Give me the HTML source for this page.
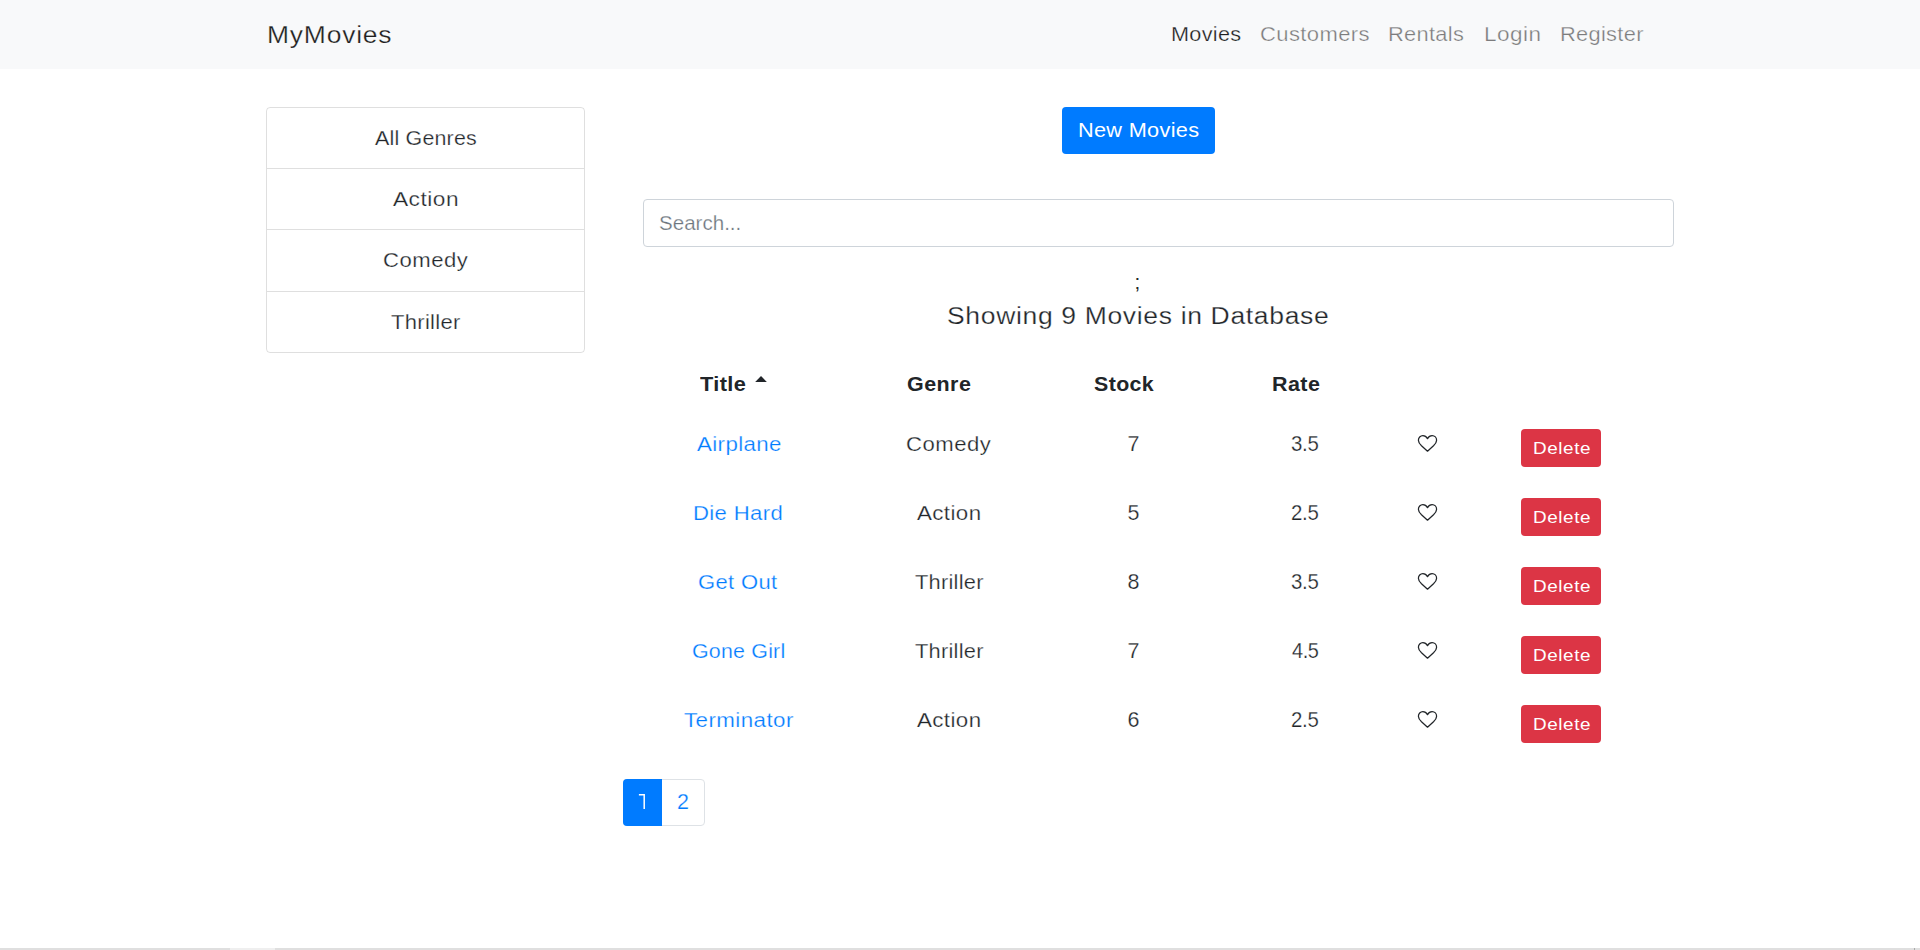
<!DOCTYPE html>
<html lang="en"><head><meta charset="utf-8"><title>MyMovies</title>
<style>
html,body{margin:0;padding:0;background:#fff;}
body{width:1920px;height:950px;position:relative;overflow:hidden;font-family:"Liberation Sans",sans-serif;color:#212529;}
.tx{position:absolute;white-space:nowrap;line-height:1;font-weight:400;transform-origin:0 0;}
.b{font-weight:700;}
a.tx{text-decoration:none;}
.box{position:absolute;box-sizing:border-box;}
.hrt{position:absolute;}
</style></head><body>
<nav class="box" style="left:0;top:0;width:1920px;height:69px;background:#f8f9fa"></nav>

<div class="box" style="left:266px;top:107px;width:319px;height:246px;border:1px solid rgba(0,0,0,.125);border-radius:4px"></div>
<div class="box" style="left:267px;top:168px;width:317px;height:1px;background:rgba(0,0,0,.125)"></div>
<div class="box" style="left:267px;top:229px;width:317px;height:1px;background:rgba(0,0,0,.125)"></div>
<div class="box" style="left:267px;top:291px;width:317px;height:1px;background:rgba(0,0,0,.125)"></div>
<div class="box" style="left:1062px;top:107px;width:153px;height:47px;background:#007bff;border-radius:4px"></div>
<div class="box" style="left:643px;top:199px;width:1031px;height:48px;border:1px solid #ced4da;border-radius:4px;background:#fff"></div>
<span class="tx" style="left:1134.5px;top:271.5px;font-size:20.5px;color:#212529">;</span>
<svg class="hrt" style="left:754px;top:375px" width="14" height="8" viewBox="0 0 14 8"><path d="M1.2 7 L7 1 L12.8 7 Z" fill="#212529"/></svg>
<div class="box" style="left:1521px;top:429px;width:80px;height:38px;background:#dc3545;border-radius:4px"></div>
<svg class="hrt" style="left:1417px;top:434px" width="21" height="18" viewBox="0 0 21 18"><path d="M10.5 4.6 C9.3 2.6 7.7 1.7 5.9 1.7 C3.3 1.7 1.4 3.7 1.4 6.3 C1.4 8.4 2.6 10 4.5 11.8 L10.5 17.2 L16.5 11.8 C18.4 10 19.6 8.4 19.6 6.3 C19.6 3.7 17.7 1.7 15.1 1.7 C13.3 1.7 11.7 2.6 10.5 4.6 Z" fill="none" stroke="#212529" stroke-width="1.25" stroke-linejoin="round"/></svg>
<div class="box" style="left:1521px;top:498px;width:80px;height:38px;background:#dc3545;border-radius:4px"></div>
<svg class="hrt" style="left:1417px;top:503px" width="21" height="18" viewBox="0 0 21 18"><path d="M10.5 4.6 C9.3 2.6 7.7 1.7 5.9 1.7 C3.3 1.7 1.4 3.7 1.4 6.3 C1.4 8.4 2.6 10 4.5 11.8 L10.5 17.2 L16.5 11.8 C18.4 10 19.6 8.4 19.6 6.3 C19.6 3.7 17.7 1.7 15.1 1.7 C13.3 1.7 11.7 2.6 10.5 4.6 Z" fill="none" stroke="#212529" stroke-width="1.25" stroke-linejoin="round"/></svg>
<div class="box" style="left:1521px;top:567px;width:80px;height:38px;background:#dc3545;border-radius:4px"></div>
<svg class="hrt" style="left:1417px;top:572px" width="21" height="18" viewBox="0 0 21 18"><path d="M10.5 4.6 C9.3 2.6 7.7 1.7 5.9 1.7 C3.3 1.7 1.4 3.7 1.4 6.3 C1.4 8.4 2.6 10 4.5 11.8 L10.5 17.2 L16.5 11.8 C18.4 10 19.6 8.4 19.6 6.3 C19.6 3.7 17.7 1.7 15.1 1.7 C13.3 1.7 11.7 2.6 10.5 4.6 Z" fill="none" stroke="#212529" stroke-width="1.25" stroke-linejoin="round"/></svg>
<div class="box" style="left:1521px;top:636px;width:80px;height:38px;background:#dc3545;border-radius:4px"></div>
<svg class="hrt" style="left:1417px;top:641px" width="21" height="18" viewBox="0 0 21 18"><path d="M10.5 4.6 C9.3 2.6 7.7 1.7 5.9 1.7 C3.3 1.7 1.4 3.7 1.4 6.3 C1.4 8.4 2.6 10 4.5 11.8 L10.5 17.2 L16.5 11.8 C18.4 10 19.6 8.4 19.6 6.3 C19.6 3.7 17.7 1.7 15.1 1.7 C13.3 1.7 11.7 2.6 10.5 4.6 Z" fill="none" stroke="#212529" stroke-width="1.25" stroke-linejoin="round"/></svg>
<div class="box" style="left:1521px;top:705px;width:80px;height:38px;background:#dc3545;border-radius:4px"></div>
<svg class="hrt" style="left:1417px;top:710px" width="21" height="18" viewBox="0 0 21 18"><path d="M10.5 4.6 C9.3 2.6 7.7 1.7 5.9 1.7 C3.3 1.7 1.4 3.7 1.4 6.3 C1.4 8.4 2.6 10 4.5 11.8 L10.5 17.2 L16.5 11.8 C18.4 10 19.6 8.4 19.6 6.3 C19.6 3.7 17.7 1.7 15.1 1.7 C13.3 1.7 11.7 2.6 10.5 4.6 Z" fill="none" stroke="#212529" stroke-width="1.25" stroke-linejoin="round"/></svg>
<div class="box" style="left:623px;top:779px;width:82px;height:47px;border:1px solid #dee2e6;border-radius:4px;background:#fff"></div>
<div class="box" style="left:623px;top:779px;width:39px;height:47px;background:#007bff;border-radius:4px 0 0 4px"></div>
<svg class="hrt" style="left:636px;top:791px" width="12" height="20" viewBox="636 791 12 20"><path d="M638.9 794.7 H644.2 V809" fill="none" stroke="#fff" stroke-width="1.5"/></svg>
<div class="box" style="left:0;top:948px;width:1920px;height:2px;background:#dfdfdf"></div>
<div class="box" style="left:230px;top:948px;width:45px;height:2px;background:#efefef"></div>
<div class="box" style="left:1914px;top:948px;width:1px;height:2px;background:#aaa"></div>
<a class="tx" style="left:266.75px;top:24.1px;font-size:23.5px;letter-spacing:0.7px;transform:scaleX(1.1254);color:rgba(0,0,0,.9);-webkit-text-stroke:0.25px #f8f9fa">MyMovies</a>
<a class="tx" style="left:1170.5px;top:23.9px;font-size:20.5px;letter-spacing:0.28px;transform:scaleX(1.0565);color:rgba(0,0,0,.9);-webkit-text-stroke:0.25px #f8f9fa">Movies</a>
<a class="tx" style="left:1259.9px;top:23.9px;font-size:20.5px;letter-spacing:0.36px;transform:scaleX(1.0743);color:rgba(0,0,0,.5);-webkit-text-stroke:0.25px #f8f9fa">Customers</a>
<a class="tx" style="left:1388.2px;top:23.9px;font-size:20.5px;letter-spacing:0.29px;transform:scaleX(1.0648);color:rgba(0,0,0,.5);-webkit-text-stroke:0.25px #f8f9fa">Rentals</a>
<a class="tx" style="left:1483.7px;top:23.9px;font-size:20.5px;letter-spacing:0.45px;transform:scaleX(1.0983);color:rgba(0,0,0,.5);-webkit-text-stroke:0.25px #f8f9fa">Login</a>
<a class="tx" style="left:1560.3px;top:23.9px;font-size:20.5px;letter-spacing:0.28px;transform:scaleX(1.0653);color:rgba(0,0,0,.5);-webkit-text-stroke:0.25px #f8f9fa">Register</a>
<a class="tx" style="left:375.0px;top:128.0px;font-size:20.5px;letter-spacing:0.19px;transform:scaleX(1.0442);color:#212529;-webkit-text-stroke:0.25px #fff">All Genres</a>
<a class="tx" style="left:393.2px;top:189.2px;font-size:20.5px;letter-spacing:0.46px;transform:scaleX(1.105);color:#212529;-webkit-text-stroke:0.25px #fff">Action</a>
<a class="tx" style="left:383.3px;top:250.0px;font-size:20.5px;letter-spacing:0.47px;transform:scaleX(1.0784);color:#212529;-webkit-text-stroke:0.25px #fff">Comedy</a>
<a class="tx" style="left:391.0px;top:311.8px;font-size:20.5px;letter-spacing:0.26px;transform:scaleX(1.0745);color:#212529;-webkit-text-stroke:0.25px #fff">Thriller</a>
<span class="tx" style="left:1077.8px;top:120.0px;font-size:20.5px;letter-spacing:0.29px;transform:scaleX(1.0591);color:#fff;-webkit-text-stroke:0px #007bff">New Movies</span>
<span class="tx" style="left:658.8px;top:213.0px;font-size:20.5px;letter-spacing:0.01px;transform:scaleX(1.0018);color:#6c757d;-webkit-text-stroke:0.25px #fff">Search...</span>
<span class="tx" style="left:947.2px;top:305.0px;font-size:23.5px;letter-spacing:0.58px;transform:scaleX(1.1282);color:#212529;-webkit-text-stroke:0.25px #fff">Showing 9 Movies in Database</span>
<span class="tx b" style="left:699.9px;top:373.8px;font-size:20px;letter-spacing:0.35px;transform:scaleX(1.0893);color:#212529;-webkit-text-stroke:0px #fff">Title</span>
<span class="tx b" style="left:907.1px;top:373.8px;font-size:20px;letter-spacing:0.41px;transform:scaleX(1.0737);color:#212529;-webkit-text-stroke:0px #fff">Genre</span>
<span class="tx b" style="left:1093.9px;top:373.8px;font-size:20px;letter-spacing:0.36px;transform:scaleX(1.0687);color:#212529;-webkit-text-stroke:0px #fff">Stock</span>
<span class="tx b" style="left:1271.6px;top:373.8px;font-size:20px;letter-spacing:0.41px;transform:scaleX(1.0733);color:#212529;-webkit-text-stroke:0px #fff">Rate</span>
<a class="tx" style="left:696.8px;top:433.9px;font-size:20.5px;letter-spacing:0.36px;transform:scaleX(1.087);color:#007bff;-webkit-text-stroke:0.25px #fff">Airplane</a>
<a class="tx" style="left:693.4px;top:502.9px;font-size:20.5px;letter-spacing:0.34px;transform:scaleX(1.0772);color:#007bff;-webkit-text-stroke:0.25px #fff">Die Hard</a>
<a class="tx" style="left:698.4px;top:571.9px;font-size:20.5px;letter-spacing:0.34px;transform:scaleX(1.072);color:#007bff;-webkit-text-stroke:0.25px #fff">Get Out</a>
<a class="tx" style="left:691.7px;top:640.9px;font-size:20.5px;letter-spacing:0.19px;transform:scaleX(1.044);color:#007bff;-webkit-text-stroke:0.25px #fff">Gone Girl</a>
<a class="tx" style="left:683.6px;top:709.9px;font-size:20.5px;letter-spacing:0.38px;transform:scaleX(1.0909);color:#007bff;-webkit-text-stroke:0.25px #fff">Terminator</a>
<span class="tx" style="left:906.3px;top:433.9px;font-size:20.5px;letter-spacing:0.47px;transform:scaleX(1.0784);color:#212529;-webkit-text-stroke:0.25px #fff">Comedy</span>
<span class="tx" style="left:917.0px;top:502.9px;font-size:20.5px;letter-spacing:0.39px;transform:scaleX(1.0875);color:#212529;-webkit-text-stroke:0.25px #fff">Action</span>
<span class="tx" style="left:914.9px;top:571.9px;font-size:20.5px;letter-spacing:0.23px;transform:scaleX(1.0655);color:#212529;-webkit-text-stroke:0.25px #fff">Thriller</span>
<span class="tx" style="left:914.9px;top:640.9px;font-size:20.5px;letter-spacing:0.23px;transform:scaleX(1.0655);color:#212529;-webkit-text-stroke:0.25px #fff">Thriller</span>
<span class="tx" style="left:917.0px;top:709.9px;font-size:20.5px;letter-spacing:0.39px;transform:scaleX(1.0875);color:#212529;-webkit-text-stroke:0.25px #fff">Action</span>
<span class="tx" style="left:1532.9px;top:439.9px;font-size:16.5px;letter-spacing:0.5px;transform:scaleX(1.1446);color:#fff">Delete</span>
<span class="tx" style="left:1532.9px;top:508.9px;font-size:16.5px;letter-spacing:0.5px;transform:scaleX(1.1446);color:#fff">Delete</span>
<span class="tx" style="left:1532.9px;top:577.9px;font-size:16.5px;letter-spacing:0.5px;transform:scaleX(1.1446);color:#fff">Delete</span>
<span class="tx" style="left:1532.9px;top:646.9px;font-size:16.5px;letter-spacing:0.5px;transform:scaleX(1.1446);color:#fff">Delete</span>
<span class="tx" style="left:1532.9px;top:715.9px;font-size:16.5px;letter-spacing:0.5px;transform:scaleX(1.1446);color:#fff">Delete</span>
<a class="tx" style="left:676.9px;top:792.0px;font-size:21.5px;letter-spacing:0px;transform:scaleX(1);color:#007bff;-webkit-text-stroke:0.25px #fff">2</a>
<span class="tx" style="left:1127.6px;top:433.9px;font-size:21.5px;letter-spacing:0px;transform:scaleX(1);color:#212529;-webkit-text-stroke:0.25px #fff">7</span>
<span class="tx" style="left:1290.9px;top:433.9px;font-size:21.5px;letter-spacing:-0.32px;transform:scaleX(0.95);color:#212529;-webkit-text-stroke:0.25px #fff">3.5</span>
<span class="tx" style="left:1127.6px;top:502.9px;font-size:21.5px;letter-spacing:0px;transform:scaleX(1);color:#212529;-webkit-text-stroke:0.25px #fff">5</span>
<span class="tx" style="left:1290.9px;top:502.9px;font-size:21.5px;letter-spacing:-0.32px;transform:scaleX(0.95);color:#212529;-webkit-text-stroke:0.25px #fff">2.5</span>
<span class="tx" style="left:1127.6px;top:571.9px;font-size:21.5px;letter-spacing:0px;transform:scaleX(1);color:#212529;-webkit-text-stroke:0.25px #fff">8</span>
<span class="tx" style="left:1290.9px;top:571.9px;font-size:21.5px;letter-spacing:-0.32px;transform:scaleX(0.95);color:#212529;-webkit-text-stroke:0.25px #fff">3.5</span>
<span class="tx" style="left:1127.6px;top:640.9px;font-size:21.5px;letter-spacing:0px;transform:scaleX(1);color:#212529;-webkit-text-stroke:0.25px #fff">7</span>
<span class="tx" style="left:1291.9px;top:640.9px;font-size:21.5px;letter-spacing:-0.49px;transform:scaleX(0.9276);color:#212529;-webkit-text-stroke:0.25px #fff">4.5</span>
<span class="tx" style="left:1127.6px;top:709.9px;font-size:21.5px;letter-spacing:0px;transform:scaleX(1);color:#212529;-webkit-text-stroke:0.25px #fff">6</span>
<span class="tx" style="left:1290.9px;top:709.9px;font-size:21.5px;letter-spacing:-0.32px;transform:scaleX(0.95);color:#212529;-webkit-text-stroke:0.25px #fff">2.5</span>
</body></html>
